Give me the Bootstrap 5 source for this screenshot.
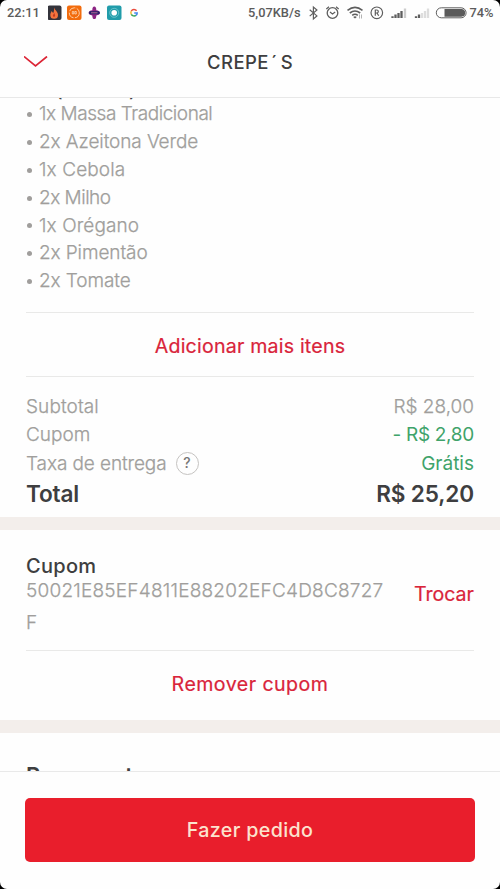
<!DOCTYPE html>
<html lang="pt-BR">
<head>
<meta charset="utf-8">
<meta name="viewport" content="width=device-width, initial-scale=1">
<title>CREPE´S</title>
<link href="https://cdn.jsdelivr.net/npm/bootstrap@5.3.0/dist/css/bootstrap.min.css" rel="stylesheet">
<style>
body{background:#000;font-family:Inter,"Liberation Sans",sans-serif;color:#3e3e40;font-size:19px;line-height:28px}
.phone{width:500px;height:889px;background:#fefefe;border-radius:7px}
.status{height:26px;padding:0 6.500px 0 7px;font:500 12.8px/26px Roboto,sans-serif;color:#5b5b5b}
.status svg{display:block;flex:none}
.clock{width:33px;letter-spacing:.1px}
.topbar{height:72px;border-bottom:1px solid #e8e8e8;padding:0 24px}
.topbar h1{font-size:18.5px;font-weight:500;letter-spacing:.45px;line-height:24px}
.topbar h1 span{margin:0 3px 0 2px}
.thin{font-weight:300;color:#a09e9c;-webkit-text-stroke:.25px #a09e9c}
.green{color:#3fa36a;font-weight:400;-webkit-text-stroke:0}
.red{color:#d9243a;-webkit-text-stroke:.2px #d9243a}
.side{padding-left:26px;padding-right:26px}
.clipped{height:2px;line-height:28px}
.clipped span{margin-top:-21px;font-weight:500;letter-spacing:.7px}
.items{padding-top:.4px;padding-bottom:17px}
.items li{height:27.8px;line-height:27.8px;display:flex;align-items:center}
.items li::before{content:"";width:5px;height:5px;border-radius:50%;background:#a09e9c;margin:1px 7px 0 1px}
.rule{height:1px;background:#e9e9e8}
.action{height:63px;padding:3px 0 0;background:none;border:0;font-size:19.6px;letter-spacing:.2px}
.remove{height:69px;padding:0 0 3px;letter-spacing:.45px}
.totals{padding-top:16px;height:140px}
.totals .line{height:28.5px}
.total{font-size:22.6px;font-weight:600;height:31px;letter-spacing:-.15px}
.t1{letter-spacing:.1px}.t3{letter-spacing:-.1px}.v2{letter-spacing:-.3px}
.l1{letter-spacing:-.45px}.l2,.l6,.l7{letter-spacing:-.1px}.l3,.l5{letter-spacing:.1px}.l4{letter-spacing:-.5px}
.help{width:23px;height:23px;border:1px solid #c5c3c1;border-radius:50%;font-size:14px;font-weight:500;color:#777;margin-left:9px;margin-top:-2px;-webkit-text-stroke:0}
.band{height:13px;background:#f3eeeb}
.coupon{height:120px;padding-top:22px}
.coupon h2{font-size:20px;font-weight:500;line-height:28px;margin:0;letter-spacing:.3px}
.code{width:362px;line-height:32px;margin-top:-5px;word-break:break-all;letter-spacing:.22px}
.change{margin-top:28px;font-size:19.6px}
.pay{padding-top:26px;height:38px;font-size:22px;font-weight:600;line-height:32px}
.foot{height:118px;border-top:1px solid #e9e9e9;padding:26px 25px 27px}
.order,.order:hover{background:#e91e2c;color:#fce3cf;border-radius:5px;font-size:19.7px;font-weight:500;border:0;letter-spacing:.35px;padding-top:8px}
</style>
<script src="https://cdn.jsdelivr.net/npm/bootstrap@5.3.0/dist/js/bootstrap.bundle.min.js"></script>
</head>
<body class="overflow-hidden">
<div class="phone d-flex flex-column overflow-hidden">
  <div class="status d-flex align-items-center justify-content-between flex-shrink-0">
    <div class="d-flex align-items-center">
      <span class="clock me-2">22:11</span>
      <svg width="95" height="18" viewBox="48 4 95 18">
        <rect x="47.500" y="5.500" width="14" height="14.500" rx="2" fill="#33333b"/>
        <path d="M54 7.500c1 3 4 4 4 7.500a3.800 3.800 0 0 1-7.700 0c0-2 1-3 1.400-4 .6 1 .9 1.600 1.600 2 .7-2 .9-3 .7-5.500z" fill="#f4743d"/>
        <path d="M54 17c-2-1-.7-2.500.4-4 .3 1.600 1.700 3-.4 4z" fill="#c33a20"/>
        <rect x="67" y="5.500" width="14.500" height="14.500" rx="2" fill="#f26b0c"/>
        <circle cx="74.300" cy="12.800" r="5" fill="none" stroke="#ffd7b3" stroke-width=".9" stroke-dasharray="7 1.500"/>
        <path d="M72.300 11.500v2.500h1.400v-2.500zM74.800 11.500v2.500h1.500v-2.500z" fill="none" stroke="#ffe3c9" stroke-width=".7"/>
        <path d="M94.300 6.500q2 0 2 3.700 3.700.5 3.700 2.600t-3.700 2.600q0 3.700-2 3.700t-2-3.700q-3.700-.5-3.700-2.600t3.700-2.600q0-3.700 2-3.700z" fill="#8c2483"/>
        <rect x="89" y="11.300" width="10.700" height="3" rx="1.400" fill="#242568"/><path d="M91 12.800h6.500" stroke="#d16c9e" stroke-width=".9"/>
        <rect x="107" y="5.500" width="14.500" height="14.500" rx="2" fill="#209caa"/>
        <circle cx="114.200" cy="12.800" r="4.500" fill="none" stroke="#77c9d0" stroke-width=".8"/><circle cx="114.200" cy="12.800" r="2.800" fill="#fff"/>
        <g fill="none" stroke-width="1.500"><path d="M136.600 10.800a3.200 3.200 0 0 0-5.300.3" stroke="#e94b3c"/><path d="M131.300 11.100a3.200 3.200 0 0 0 0 3.200" stroke="#f4b731"/><path d="M131.300 14.300a3.200 3.200 0 0 0 4.700 1" stroke="#3aa65a"/><path d="M136 15.300a3.200 3.200 0 0 0 1.200-2.400h-3" stroke="#4487ee"/></g>
      </svg>
    </div>
    <div class="d-flex align-items-center">
      <span>5,07KB/s</span>
      <svg class="ms-1" width="165" height="18" viewBox="304.500 4 165 18" fill="none" stroke="#5e5e5e">
        <path d="M309.200 9.800l7.200 6.100-3.500 3V7l3.500 3-7.200 6.100" stroke-width="1.200"/>
        <circle cx="332" cy="13" r="5.300" stroke-width="1.300"/><path d="M329.500 12l2.500 2 2.700-2M325.800 9l2.700-2.300M335.500 6.700l2.700 2.300" stroke-width="1.200"/>
        <path d="M347 10.300q7.500-5.800 15 0M349.300 13q5.200-4 10.400 0M351.700 15.400q2.800-2.200 5.600 0" stroke-width="1.600"/><path d="M354.500 18.600l-1.800-1.700q1.800-1.200 3.600 0z" fill="#5e5e5e" stroke="none"/><path d="M359 14.500v4M361 14.500v4" stroke="#aaa" stroke-width=".9"/>
        <circle cx="376.300" cy="12.800" r="5.800" stroke-width="1.200"/><path d="M374.800 15.800v-5.800h1.500a1.500 1.500 0 0 1 0 3h-1.500M376.500 13l1.700 2.800" stroke-width="1.200"/>
        <g stroke-width="2.300"><path d="M392 18v-1.800M395 18v-3.500M398 18v-5M401 18v-7"/><path d="M404.500 18v-9.500" stroke="#ccc"/><path d="M415.500 18v-1.800M418.500 18v-3.500"/><path d="M421.500 18v-5M424.500 18v-7M427.500 18v-9.500" stroke="#ddd"/></g>
        <rect x="435.800" y="7.800" width="29.800" height="10" rx="5" stroke-width="1"/><path d="M444 9h16.800a3.800 3.800 0 0 1 0 7.700H444z" fill="#5a5a5a" stroke="none"/>
      </svg>
      <span>74%</span>
    </div>
  </div>
  <header class="topbar d-flex align-items-center flex-shrink-0">
    <svg width="24" height="12" viewBox="0 0 24 12" fill="none" stroke="#dc2435" stroke-width="1.700"><path d="M0 .5l11.500 9.500L23 .5"/></svg>
    <h1 class="flex-grow-1 text-center mb-0 me-4">CREPE<span>´</span>S</h1>
  </header>
  <main class="flex-grow-1 overflow-hidden">
    <div class="side">
      <div class="clipped d-flex overflow-hidden"><span>2x (Salado)</span></div>
      <ul class="items list-unstyled mb-0 thin">
        <li><span class="l1">1x Massa Tradicional</span></li><li><span class="l2">2x Azeitona Verde</span></li><li><span class="l3">1x Cebola</span></li><li><span class="l4">2x Milho</span></li><li><span class="l5">1x Orégano</span></li><li><span class="l6">2x Pimentão</span></li><li><span class="l7">2x Tomate</span></li>
      </ul>
      <div class="rule"></div>
      <button class="action red w-100 d-block" type="button">Adicionar mais itens</button>
      <div class="rule"></div>
      <div class="totals">
        <div class="line d-flex justify-content-between thin"><span class="t1">Subtotal</span><span>R$ 28,00</span></div>
        <div class="line d-flex justify-content-between thin"><span>Cupom</span><span class="green v2">- R$ 2,80</span></div>
        <div class="line d-flex justify-content-between thin"><span class="d-flex align-items-center"><span class="t3">Taxa de entrega</span><span class="help d-flex align-items-center justify-content-center">?</span></span><span class="green">Grátis</span></div>
        <div class="total d-flex align-items-center justify-content-between"><span>Total</span><span>R$ 25,20</span></div>
      </div>
    </div>
    <div class="band"></div>
    <div class="side">
      <div class="coupon d-flex justify-content-between align-items-start">
        <div><h2>Cupom</h2><div class="code thin">50021E85EF4811E88202EFC4D8C8727F</div></div>
        <span class="red change">Trocar</span>
      </div>
      <div class="rule"></div>
      <button class="action remove red w-100 d-block" type="button">Remover cupom</button>
    </div>
    <div class="band"></div>
    <div class="pay side"><span>Pagamento</span></div>
  </main>
  <footer class="foot d-flex flex-shrink-0"><button class="order btn w-100" type="button">Fazer pedido</button></footer>
</div>
</body>
</html>
